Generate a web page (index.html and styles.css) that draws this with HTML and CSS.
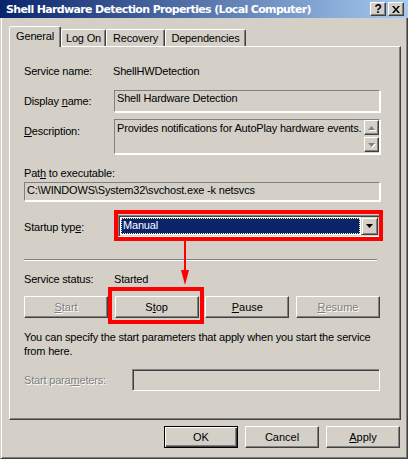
FILE: index.html
```html
<!DOCTYPE html>
<html lang="en">
<head>
    <meta charset="UTF-8">
    <title>Shell Hardware Detection Properties (Local Computer)</title>
    <link rel="stylesheet" href="styles.css">
</head>
<body>
    <div class="window">
        <div class="titlebar">
            <span class="title">Shell Hardware Detection Properties (Local Computer)</span>
            <div class="cap-btns">
                <span class="cap-btn">?</span>
                <span class="cap-btn">
                    <svg width="8" height="7" viewBox="0 0 8 7"><path d="M0 0h2l2 2.5L6 0h2L5 3.5 8 7H6L4 4.5 2 7H0l3-3.5z" fill="#000"/></svg>
                </span>
            </div>
        </div>

        <div class="frame">
            <div class="tabs">
                <div class="tab active t-general">General</div>
                <div class="tab t-logon">Log On</div>
                <div class="tab t-recovery">Recovery</div>
                <div class="tab t-deps">Dependencies</div>
            </div>

            <div class="panel">
                <div class="row svc">
                    <span class="label">Service name:</span>
                    <span class="value">ShellHWDetection</span>
                </div>

                <div class="row disp">
                    <span class="label">Display <u>n</u>ame:</span>
                    <div class="box disp-box">Shell Hardware Detection</div>
                </div>

                <div class="row desc">
                    <span class="label"><u>D</u>escription:</span>
                    <div class="box desc-box">
                        <span class="desc-text">Provides notifications for AutoPlay hardware events.</span>
                        <div class="scroll">
                            <span class="sbtn">
                                <svg width="7" height="4" viewBox="0 0 7 4"><path d="M3.5 0L7 4H0z" fill="#808080"/></svg>
                            </span>
                            <span class="sbtn">
                                <svg width="7" height="4" viewBox="0 0 7 4"><path d="M0 0h7L3.5 4z" fill="#808080"/></svg>
                            </span>
                        </div>
                    </div>
                </div>

                <div class="path-label">Pat<u>h</u> to executable:</div>
                <div class="box path-box">C:\WINDOWS\System32\svchost.exe -k netsvcs</div>

                <div class="row startup">
                    <span class="label">Startup typ<u>e</u>:</span>
                    <div class="combo">
                        <span class="combo-value"><span class="focus">Manual</span></span>
                        <span class="combo-btn">
                            <svg width="7" height="4" viewBox="0 0 7 4"><path d="M0 0h7L3.5 4z" fill="#000"/></svg>
                        </span>
                    </div>
                    <div class="annot annot-combo"></div>
                </div>

                <div class="separator"></div>

                <div class="row status">
                    <span class="label">Service status:</span>
                    <span class="value">Started</span>
                </div>

                <div class="btn-row">
                    <button class="btn disabled"><span><u>S</u>tart</span></button>
                    <button class="btn">S<u>t</u>op</button>
                    <button class="btn"><u>P</u>ause</button>
                    <button class="btn disabled"><span><u>R</u>esume</span></button>
                    <div class="annot annot-stop"></div>
                </div>

                <p class="note">You can specify the start parameters that apply when you start the service<br>from here.</p>

                <div class="row params">
                    <span class="label disabled">Start para<u>m</u>eters:</span>
                    <div class="box params-box"></div>
                </div>

                <svg class="arrow" width="10" height="46" viewBox="0 0 10 46">
                    <rect x="4" y="0" width="2" height="32" fill="#f00"/>
                    <path d="M1 29h8l-4 15z" fill="#f00"/>
                </svg>
            </div>

            <div class="footer">
                <button class="btn wide default">OK</button>
                <button class="btn wide">Cancel</button>
                <button class="btn wide"><u>A</u>pply</button>
            </div>
        </div>
    </div>
</body>
</html>
```

FILE: styles.css
```css
* {
    box-sizing: border-box;
}
body {
    margin: 0;
    background-color: #d4d0c8;
    font-family: "Liberation Sans", Arial, sans-serif;
    font-size: 11px;
    line-height: 13px;
    letter-spacing: -0.18px;
    color: #000;
}
u {
    text-underline-offset: 1px;
}
.window {
    width: 408px;
    height: 459px;
    display: flex;
    flex-direction: column;
}
.titlebar {
    height: 18px;
    flex: none;
    display: flex;
    align-items: center;
    padding: 0 4px 0 6px;
    background: linear-gradient(to right, #0a246a, #a6caf0);
}
.title {
    flex: 1;
    color: #fff;
    font-family: "DejaVu Sans", sans-serif;
    font-weight: bold;
    font-size: 11px;
    letter-spacing: -0.65px;
    white-space: nowrap;
}
.cap-btns {
    display: flex;
    gap: 2px;
}
.cap-btn {
    width: 16px;
    height: 14px;
    display: flex;
    align-items: center;
    justify-content: center;
    background-color: #d4d0c8;
    border: 1px solid;
    border-color: #fff #404040 #404040 #fff;
    box-shadow: inset -1px -1px #808080;
    font-weight: bold;
    font-size: 12px;
}
.frame {
    flex: 1;
    border-left: 1px solid #d4d0c8;
    border-right: 1px solid #404040;
    border-bottom: 1px solid #404040;
    box-shadow: inset 1px 0 #fff, inset -1px -1px #808080;
    padding: 8px 6px 0 8px;
}
.tabs {
    display: flex;
    align-items: flex-end;
    height: 20px;
    position: relative;
    z-index: 1;
}
.tab {
    height: 17px;
    padding-top: 2px;
    text-align: center;
    border: 1px solid;
    border-bottom: none;
    border-color: #fff #404040 transparent #fff;
    border-radius: 2px 2px 0 0;
    box-shadow: inset -1px 0 #808080;
}
.tab.active {
    height: 21px;
    margin-bottom: -1px;
    padding-top: 3px;
    background-color: #d4d0c8;
}
.t-general { width: 52px; }
.t-logon { width: 45px; }
.t-recovery { width: 59px; }
.t-deps { width: 81px; }
.panel {
    position: relative;
    height: 374px;
    border: 1px solid;
    border-color: #fff #404040 #404040 #fff;
    box-shadow: inset -1px -1px #808080;
    padding: 16px 20px 0 14px;
}
.row {
    display: flex;
    align-items: center;
    position: relative;
}
.row .label {
    width: 90px;
    flex: none;
}
.svc {
    height: 16px;
}
.svc .label {
    width: 89px;
}
.box {
    border: 1px solid #808080;
    border-right-color: #fff;
    border-bottom-color: #fff;
    box-shadow: inset -1px -1px #d4d0c8, 1px 1px #fff;
    padding: 1px 2px;
    white-space: nowrap;
}
.disp {
    margin-top: 11px;
    height: 22px;
}
.disp-box {
    width: 266px;
    height: 22px;
}
.desc {
    margin-top: 7px;
    height: 35px;
    align-items: flex-start;
}
.desc .label {
    padding-top: 6px;
}
.desc-box {
    width: 266px;
    height: 35px;
    display: flex;
    padding: 0 0 0 2px;
}
.desc-text {
    flex: 1;
    min-width: 0;
    overflow: hidden;
    padding-top: 2px;
}
.scroll {
    flex: none;
    width: 15px;
    display: flex;
    flex-direction: column;
    justify-content: space-between;
    padding: 0 0 1px;
}
.sbtn {
    height: 15px;
    display: flex;
    align-items: center;
    justify-content: center;
    border: 1px solid;
    border-color: #fff #404040 #404040 #fff;
    box-shadow: inset -1px -1px #808080;
}
.sbtn svg {
    filter: drop-shadow(1px 1px 0 #fff);
}
.path-label {
    margin-top: 12px;
    height: 14px;
    line-height: 14px;
}
.path-box {
    margin-top: 2px;
    width: 356px;
    height: 19px;
    padding-top: 1px;
}
.startup {
    margin-top: 9px;
    height: 31px;
}
.startup .label {
    padding-top: 3px;
}
.combo {
    margin-left: 4px;
    width: 262px;
    height: 22px;
    display: flex;
    padding: 1px;
    background-color: #fff;
    border: 1px solid;
    border-color: #808080 #fff #fff #808080;
    box-shadow: inset 1px 1px #404040, inset -1px -1px #d4d0c8;
}
.combo-value {
    flex: 1;
    margin: 1px;
    background-color: #0a246a;
    color: #fff;
    outline: 1px dotted #f0f0b0;
    outline-offset: -1px;
    padding-left: 2px;
    display: flex;
    align-items: center;
}
.combo-btn {
    width: 17px;
    display: flex;
    align-items: center;
    justify-content: center;
    background-color: #d4d0c8;
    border: 1px solid;
    border-color: #d4d0c8 #404040 #404040 #d4d0c8;
    box-shadow: inset 1px 1px #fff, inset -1px -1px #808080;
}
.annot {
    position: absolute;
    border: 4px solid #f00;
}
.annot-combo {
    left: 90px;
    top: 0;
    width: 269px;
    height: 31px;
}
.separator {
    margin-top: 18px;
    width: 353px;
    border-top: 1px solid #808080;
    border-bottom: 1px solid #fff;
}
.status {
    margin-top: 11px;
    height: 14px;
}
.btn {
    height: 22px;
    padding: 0;
    font: inherit;
    color: #000;
    display: flex;
    align-items: center;
    justify-content: center;
    background-color: #d4d0c8;
    border: 1px solid;
    border-color: #fff #404040 #404040 #fff;
    box-shadow: inset -1px -1px #808080;
}
.btn.disabled {
    color: #808080;
    text-shadow: 1px 1px #fff;
}
.btn-row {
    position: relative;
    margin-top: 10px;
    width: 356px;
    display: flex;
    justify-content: space-between;
}
.btn-row .btn {
    width: 84px;
}
.annot-stop {
    left: 84px;
    top: -9px;
    width: 96px;
    height: 37px;
}
.note {
    margin: 12px 0 0;
    line-height: 14px;
    white-space: nowrap;
}
.params {
    margin-top: 11px;
    height: 22px;
}
.params .label {
    width: 108px;
}
.label.disabled {
    color: #808080;
    text-shadow: 1px 1px #fff;
}
.params-box {
    width: 248px;
    height: 22px;
    border-color: #808080 #fff #fff #808080;
    box-shadow: inset 1px 1px #404040, inset -1px -1px #d4d0c8;
}
.arrow {
    position: absolute;
    left: 170px;
    top: 194px;
}
.footer {
    margin-top: 6px;
    padding-right: 1px;
    display: flex;
    justify-content: flex-end;
    gap: 7px;
}
.btn.wide {
    width: 74px;
}
.btn.default {
    border-color: #000;
    box-shadow: inset 1px 1px #fff, inset -1px -1px #404040, inset -2px -2px #808080;
}
```
